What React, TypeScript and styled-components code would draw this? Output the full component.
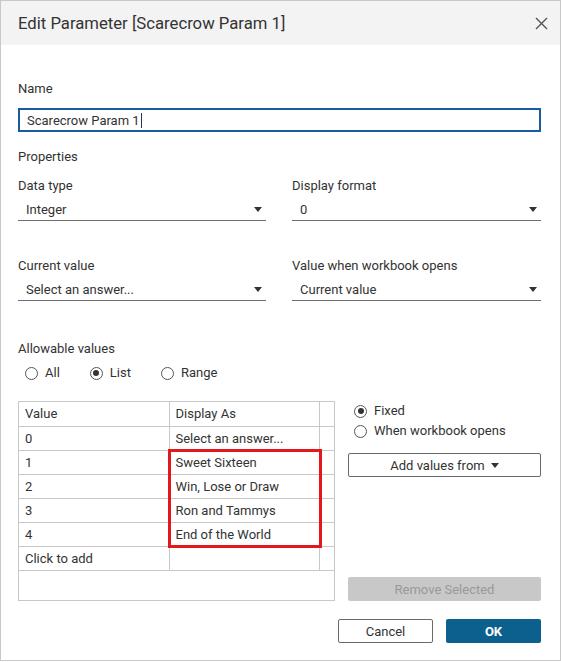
import React from 'react';
import styled, { createGlobalStyle } from 'styled-components';

const GlobalStyle = createGlobalStyle`
  html, body {
    margin: 0;
    padding: 0;
    background: #ffffff;
  }
  body {
    font-family: Roboto, "Liberation Sans", Arial, sans-serif;
    color: #333333;
  }
  * {
    box-sizing: border-box;
  }
`;

const Dialog = styled.div`
  width: 561px;
  height: 661px;
  border: 1px solid #c8c8c8;
  background: #ffffff;
  display: flex;
  flex-direction: column;
`;

const Header = styled.div`
  height: 44px;
  background: #f3f3f3;
  display: flex;
  align-items: center;
  justify-content: space-between;
  padding: 0 12px 0 17px;
`;

const Title = styled.div`
  font-size: 16.7px;
  color: #333333;
`;

const CloseButton = styled.button`
  width: 14px;
  height: 14px;
  padding: 0;
  border: none;
  background: transparent;
  display: flex;
  align-items: center;
  justify-content: center;
  cursor: pointer;
`;

const Body = styled.div`
  flex: 1;
  display: flex;
  flex-direction: column;
  padding: 0 19px 0 17px;
`;

const Label = styled.div<{ $top: number }>`
  font-size: 13px;
  line-height: 16px;
  margin-top: ${(p) => p.$top}px;
  color: #333333;
`;

const NameInput = styled.div`
  margin-top: 11px;
  height: 24px;
  border: 2px solid #1a5a9e;
  display: flex;
  align-items: center;
  padding-left: 7px;
  font-size: 13px;
`;

const Caret = styled.span`
  display: inline-block;
  width: 1px;
  height: 15px;
  background: #333333;
  margin-left: 1px;
`;

const FieldGrid = styled.div`
  display: grid;
  grid-template-columns: 248px 249px;
  column-gap: 26px;
`;

const Field = styled.div`
  display: flex;
  flex-direction: column;
`;

const Select = styled.div`
  margin-top: 4px;
  height: 23px;
  border-bottom: 1px solid #6e6e6e;
  display: flex;
  align-items: center;
  justify-content: space-between;
  padding: 0 4px 0 8px;
  font-size: 13px;
`;

const Arrow = styled.span<{ $size?: number }>`
  width: 0;
  height: 0;
  border-left: ${(p) => (p.$size || 8) / 2}px solid transparent;
  border-right: ${(p) => (p.$size || 8) / 2}px solid transparent;
  border-top: ${(p) => ((p.$size || 8) * 5) / 8}px solid #333333;
`;

const RadioRow = styled.div`
  margin-top: 8px;
  height: 16px;
  display: flex;
  align-items: center;
  gap: 30px;
  padding-left: 7px;
`;

const RadioItem = styled.label`
  display: flex;
  align-items: center;
  gap: 7px;
  font-size: 13px;
  line-height: 16px;
  height: 20px;
`;

const RadioCircle = styled.span<{ $checked?: boolean }>`
  width: 13px;
  height: 13px;
  border-radius: 50%;
  border: 1px solid #555555;
  display: flex;
  align-items: center;
  justify-content: center;
  background: #ffffff;
  &::after {
    content: '';
    width: 6px;
    height: 6px;
    border-radius: 50%;
    background: ${(p) => (p.$checked ? '#333333' : 'transparent')};
  }
`;

const ValuesArea = styled.div`
  margin-top: 20px;
  height: 200px;
  display: flex;
  gap: 13px;
`;

const TableBox = styled.div`
  position: relative;
  width: 317px;
  height: 200px;
  border: 1px solid #c8c8c8;
`;

const Table = styled.table`
  border-collapse: collapse;
  table-layout: fixed;
  width: 315px;
  font-size: 13px;
`;

const Cell = styled.td`
  height: 24px;
  padding: 0 0 0 6px;
  border-bottom: 1px solid #c8c8c8;
  border-right: 1px solid #c8c8c8;
  white-space: nowrap;
  overflow: hidden;
  color: #333333;
  &:last-child {
    border-right: none;
  }
`;

const Highlight = styled.div`
  position: absolute;
  left: 149px;
  top: 47px;
  width: 154px;
  height: 99px;
  border: 3px solid #e3181d;
  pointer-events: none;
`;

const SidePanel = styled.div`
  flex: 1;
  display: flex;
  flex-direction: column;
`;

const SideRadios = styled.div`
  display: flex;
  flex-direction: column;
  padding-left: 6px;
`;

const OutlineButton = styled.button<{ $width?: number }>`
  height: 24px;
  width: ${(p) => (p.$width ? `${p.$width}px` : '100%')};
  border: 1px solid #6a6a6a;
  border-radius: 2px;
  background: #ffffff;
  font-family: inherit;
  font-size: 13px;
  color: #333333;
  display: flex;
  align-items: center;
  justify-content: center;
  gap: 6px;
  padding: 0;
`;

const AddButton = styled(OutlineButton)`
  margin-top: 12px;
`;

const DisabledButton = styled.button`
  margin-top: auto;
  height: 24px;
  width: 100%;
  border: none;
  border-radius: 2px;
  background: #c8c8c8;
  color: #999999;
  font-family: inherit;
  font-size: 13px;
  padding: 0;
`;

const Footer = styled.div`
  margin-top: 18px;
  display: flex;
  justify-content: flex-end;
  gap: 13px;
`;

const PrimaryButton = styled.button`
  height: 24px;
  width: 95px;
  border: none;
  border-radius: 2px;
  background: #0b608e;
  color: #ffffff;
  font-family: inherit;
  font-size: 13px;
  font-weight: bold;
  padding: 0;
`;

const rows = [
  { value: 'Value', display: 'Display As' },
  { value: '0', display: 'Select an answer...' },
  { value: '1', display: 'Sweet Sixteen' },
  { value: '2', display: 'Win, Lose or Draw' },
  { value: '3', display: 'Ron and Tammys' },
  { value: '4', display: 'End of the World' },
  { value: 'Click to add', display: '' }
];

const Radio = ({ label, checked }: { label: string; checked?: boolean }) => (
  <RadioItem>
    <RadioCircle $checked={checked} />
    {label}
  </RadioItem>
);

export default function App() {
  return (
    <>
      <GlobalStyle />
      <Dialog>
        <Header>
          <Title>Edit Parameter [Scarecrow Param 1]</Title>
          <CloseButton aria-label="Close">
            <svg width="13" height="13" viewBox="0 0 13 13">
              <path d="M1 1 L12 12 M12 1 L1 12" stroke="#555" strokeWidth="1.4" fill="none" />
            </svg>
          </CloseButton>
        </Header>
        <Body>
          <Label $top={36}>Name</Label>
          <NameInput>
            Scarecrow Param 1<Caret />
          </NameInput>

          <Label $top={17}>Properties</Label>
          <FieldGrid>
            <Field>
              <Label $top={13}>Data type</Label>
              <Select>
                Integer
                <Arrow />
              </Select>
            </Field>
            <Field>
              <Label $top={13}>Display format</Label>
              <Select>
                0
                <Arrow />
              </Select>
            </Field>
            <Field>
              <Label $top={37}>Current value</Label>
              <Select>
                Select an answer...
                <Arrow />
              </Select>
            </Field>
            <Field>
              <Label $top={37}>Value when workbook opens</Label>
              <Select>
                Current value
                <Arrow />
              </Select>
            </Field>
          </FieldGrid>

          <Label $top={40}>Allowable values</Label>
          <RadioRow>
            <Radio label="All" />
            <Radio label="List" checked />
            <Radio label="Range" />
          </RadioRow>

          <ValuesArea>
            <TableBox>
              <Table>
                <colgroup>
                  <col style={{ width: 150 }} />
                  <col style={{ width: 150 }} />
                  <col style={{ width: 15 }} />
                </colgroup>
                <tbody>
                  {rows.map((r) => (
                    <tr key={r.value}>
                      <Cell>{r.value}</Cell>
                      <Cell>{r.display}</Cell>
                      <Cell />
                    </tr>
                  ))}
                </tbody>
              </Table>
              <Highlight />
            </TableBox>
            <SidePanel>
              <SideRadios>
                <Radio label="Fixed" checked />
                <Radio label="When workbook opens" />
              </SideRadios>
              <AddButton>
                Add values from
                <Arrow $size={8} />
              </AddButton>
              <DisabledButton disabled>Remove Selected</DisabledButton>
            </SidePanel>
          </ValuesArea>

          <Footer>
            <OutlineButton $width={95}>Cancel</OutlineButton>
            <PrimaryButton>OK</PrimaryButton>
          </Footer>
        </Body>
      </Dialog>
    </>
  );
}
